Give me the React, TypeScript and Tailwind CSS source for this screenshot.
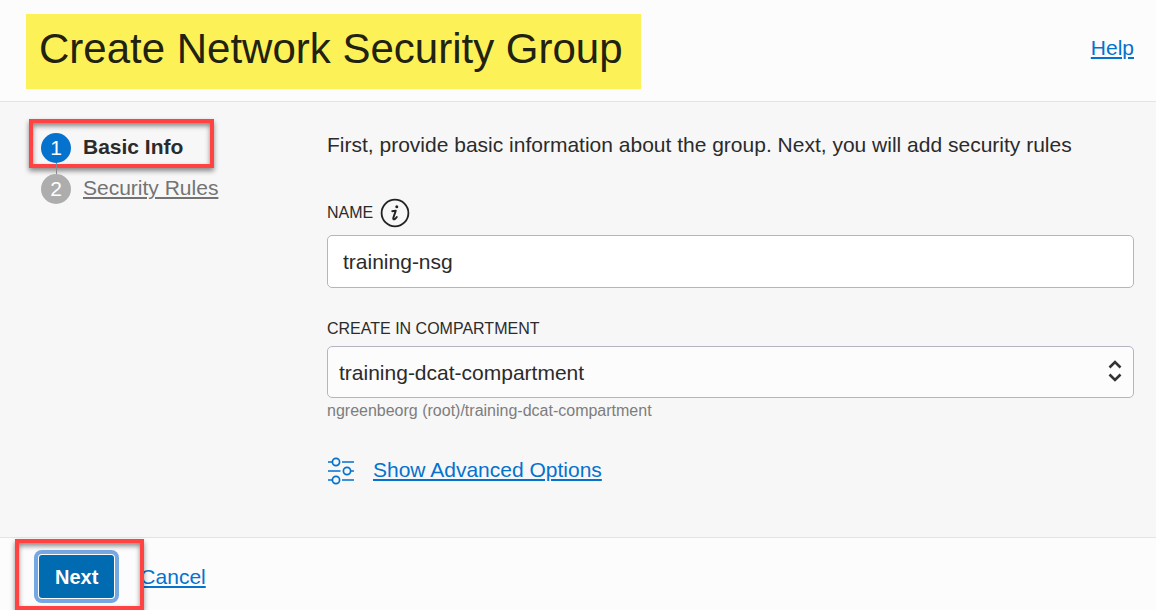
import React from "react";

type Step = { label: string; current: boolean };

const steps: Step[] = [
  { label: "Basic Info", current: true },
  { label: "Security Rules", current: false },
];

function InfoIcon() {
  return (
    <svg viewBox="0 0 30 30" className="size-[30px]" fill="none" aria-hidden="true">
      <circle cx="15" cy="15" r="13.4" stroke="#222222" strokeWidth="1.8" />
      <circle cx="16.8" cy="8.8" r="1.5" fill="#222222" />
      <path
        d="M12.200 13.200l3.600-.6-2.500 7.300c-.4 1.300.4 1.900 1.500 1.200.8-.5 1.500-1.200 2-2"
        stroke="#222222"
        strokeWidth="1.9"
        strokeLinecap="round"
        strokeLinejoin="round"
      />
    </svg>
  );
}

function SlidersIcon() {
  return (
    <svg viewBox="0 0 28 28" className="size-7" fill="none" stroke="#0572ce" strokeWidth="1.700" aria-hidden="true">
      <circle cx="9" cy="5" r="3.600" />
      <path d="M1 5h4.400M15 5h12" />
      <circle cx="20" cy="14" r="3.600" />
      <path d="M1 14h12.500M23.600 14H27" />
      <circle cx="9" cy="23" r="3.600" />
      <path d="M1 23h4.400M15 23h12" />
    </svg>
  );
}

function Steps() {
  return (
    <nav aria-label="Steps" className="w-[286px] shrink-0">
      <ol className="flex flex-col gap-[11px]">
        {steps.map((step, i) => (
          <li key={step.label} className="relative flex h-[30px] items-start gap-3">
            {i > 0 && <span className="absolute -top-[11px] left-[15px] h-[11px] w-px bg-[#8a8a8a]" />}
            <span
              className={
                step.current
                  ? "flex size-[30px] items-center justify-center rounded-full bg-[#0572ce] text-[21px] text-white"
                  : "flex size-[30px] items-center justify-center rounded-full bg-[#adadad] text-[21px] text-white"
              }
            >
              {i + 1}
            </span>
            {step.current ? (
              <span aria-current="step" className="text-[21px] leading-7 font-bold">
                {step.label}
              </span>
            ) : (
              <a
                href="#security-rules"
                className="text-[21px] leading-7 text-[#737373] underline decoration-2 underline-offset-2"
              >
                {step.label}
              </a>
            )}
            {step.current && (
              <span className="pointer-events-none absolute -top-[14px] -left-3 h-[49px] w-[185px] border-4 border-[#ff4343] shadow-[0_3px_5px_rgba(0,0,0,0.45),inset_0_3px_5px_rgba(0,0,0,0.45)]" />
            )}
          </li>
        ))}
      </ol>
    </nav>
  );
}

export default function App() {
  return (
    <div className="flex min-h-screen flex-col bg-[#f7f7f7] font-['Liberation_Sans',Arial,sans-serif] text-[#2b2b2b]">
      <header className="flex items-start justify-between border-b border-[#e4e4e4] bg-[#fcfcfc] pt-[14px] pr-[22px] pb-3 pl-[26px]">
        <h1 className="bg-[#fdf158] pt-[11px] pr-[18px] pb-4 pl-[13px] text-[42px] leading-[48px] text-[#222211]">
          Create Network Security Group
        </h1>
        <a href="#help" className="mt-5 text-[21px] leading-7 text-[#0572ce] underline decoration-2 underline-offset-2">
          Help
        </a>
      </header>

      <main className="flex flex-1 pt-[31px] pr-[22px] pb-12 pl-[41px]">
        <Steps />
        <form id="nsg-form" className="flex min-w-0 flex-1 flex-col" onSubmit={(e) => e.preventDefault()}>
          <p className="text-[21px] leading-6">
            First, provide basic information about the group. Next, you will add security rules
          </p>

          <div className="mt-[41px] flex items-center gap-[7px]">
            <label htmlFor="name" className="text-base leading-5">
              NAME
            </label>
            <button type="button" aria-label="About the name">
              <InfoIcon />
            </button>
          </div>
          <input
            id="name"
            type="text"
            defaultValue="training-nsg"
            className="mt-[7px] h-[53px] w-full rounded-[5px] border border-[#b3b6c2] bg-white px-[15px] text-[21px] outline-none"
          />

          <label htmlFor="compartment" className="mt-[31px] text-base leading-5">
            CREATE IN COMPARTMENT
          </label>
          <div className="relative mt-[7px]">
            <select
              id="compartment"
              className="h-[52px] w-full appearance-none rounded-[5px] border border-[#b3b6c2] bg-[#fcfcfc] px-[11px] pt-px text-[21px] outline-none"
            >
              <option>training-dcat-compartment</option>
            </select>
            <svg
              viewBox="0 0 14 24"
              className="pointer-events-none absolute top-[13px] right-3 h-6 w-[14px]"
              fill="none"
              stroke="#333333"
              strokeWidth="2.600"
              aria-hidden="true"
            >
              <path d="M1.500 8.500 7 3l5.500 5.500M1.500 15.500 7 21l5.500-5.500" />
            </svg>
          </div>
          <p className="mt-[3px] text-base leading-5 text-[#7d7d7d]">ngreenbeorg (root)/training-dcat-compartment</p>

          <div className="mt-9 flex items-start gap-[18px]">
            <SlidersIcon />
            <a
              href="#advanced"
              className="text-[21px] leading-[26px] text-[#0572ce] underline decoration-2 underline-offset-2"
            >
              Show Advanced Options
            </a>
          </div>
        </form>
      </main>

      <footer className="relative flex items-center border-t border-[#e4e4e4] bg-[#fcfcfc] pt-[17px] pb-3 pl-[39px]">
        <button
          type="submit"
          form="nsg-form"
          className="block h-[43px] rounded-[3px] bg-[#006bb0] px-4 text-xl font-bold text-white shadow-[0_0_0_1px_#fcfcfc,0_0_0_5px_#75a8e2]"
        >
          Next
        </button>
        <a
          href="#cancel"
          className="ml-[26px] text-[21px] leading-7 text-[#0572ce] underline decoration-2 underline-offset-2"
        >
          Cancel
        </a>
        <span className="pointer-events-none absolute bottom-0 left-[15px] h-[71px] w-[129px] border-4 border-[#ff4343] shadow-[0_3px_5px_rgba(0,0,0,0.45),inset_0_3px_5px_rgba(0,0,0,0.45)]" />
      </footer>
    </div>
  );
}
